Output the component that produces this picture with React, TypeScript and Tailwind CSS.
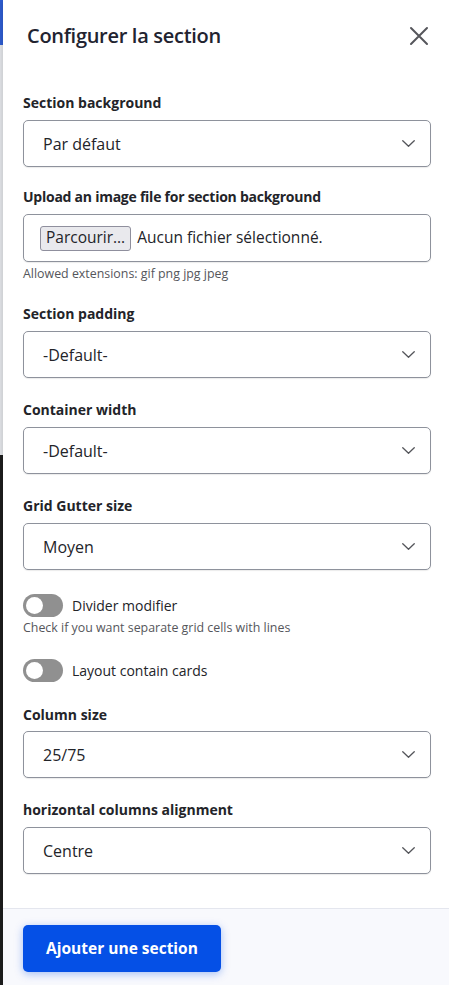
import React from "react";

const font = { fontFamily: '"Open Sans", "Noto Sans", sans-serif' };

function Chevron() {
  return (
    <svg width="13" height="7" viewBox="0 0 13 7" fill="none" className="shrink-0">
      <path d="M0.75 0.75l5.75 5.5 5.75-5.5" stroke="#55565b" strokeWidth="1.3" strokeLinecap="round" strokeLinejoin="round" />
    </svg>
  );
}

function SelectField({ label, value, mb = "mb-[23px]" }: { label: string; value: string; mb?: string }) {
  return (
    <div className={mb}>
      <div className="text-[14px] leading-[18px] font-bold text-[#232429] mb-[8px]">{label}</div>
      <div className="h-[47px] rounded-[5px] border border-[#8e929c] bg-white flex items-center justify-between pl-[19px] pr-[15px] shadow-[0_1px_1px_rgba(0,0,0,0.08)]">
        <span className="text-[16px] text-[#232429]">{value}</span>
        <Chevron />
      </div>
    </div>
  );
}

function Toggle({ label }: { label: string }) {
  return (
    <div className="flex items-center gap-[9px]">
      <div className="w-[40px] h-[23px] rounded-full bg-[#909090] flex items-center pl-[3px]">
        <div className="w-[17px] h-[17px] rounded-full bg-white" />
      </div>
      <span className="text-[14px] text-[#232429]">{label}</span>
    </div>
  );
}

export default function App() {
  return (
    <div className="flex h-[985px] w-[449px] overflow-hidden" style={font}>
      <div className="w-[3px] flex flex-col shrink-0">
        <div className="h-[45px] bg-[#2f5fd6]" />
        <div className="h-[410px] bg-[#e8eaee]" />
        <div className="flex-1 bg-[#1e1e1e]" />
      </div>
      <div className="flex-1 min-w-0 bg-white flex flex-col shadow-[-2px_0_6px_rgba(0,0,0,0.15)]">
        <div className="h-[72px] shrink-0 flex items-center justify-between pl-[24px] pr-[20px]">
          <h1 className="text-[20px] font-semibold text-[#222330] tracking-[-0.3px]">Configurer la section</h1>
          <svg width="20" height="20" viewBox="0 0 20 20" fill="none">
            <path d="M2 2l16 16M18 2L2 18" stroke="#55565b" strokeWidth="2" strokeLinecap="round" />
          </svg>
        </div>
        <div className="flex-1 min-h-0 overflow-hidden pl-[20px] pr-[18px] pt-[22px]">
          <SelectField label="Section background" value="Par défaut" mb="mb-[21px]" />
          <div className="mb-[23px]">
            <div className="text-[14px] leading-[18px] font-bold text-[#232429] mb-[8px] tracking-[-0.25px]">Upload an image file for section background</div>
            <div className="h-[48px] rounded-[5px] border border-[#8e929c] bg-white flex items-center pl-[16px] shadow-[0_1px_1px_rgba(0,0,0,0.08)]">
              <span className="h-[25px] px-[5px] flex items-center rounded-[3px] border border-[#8f8f9d] bg-[#e9e9ed] text-[15.5px] text-[#232429]">Parcourir…</span>
              <span className="ml-[6px] text-[15.5px] text-[#232429]">Aucun fichier sélectionné.</span>
            </div>
            <div className="mt-[4px] text-[12.4px] leading-[16px] text-[#55565b]">Allowed extensions: gif png jpg jpeg</div>
          </div>
          <SelectField label="Section padding" value="-Default-" />
          <SelectField label="Container width" value="-Default-" />
          <SelectField label="Grid Gutter size" value="Moyen" mb="mb-[24px]" />
          <Toggle label="Divider modifier" />
          <div className="mt-[3px] text-[12.4px] leading-[16px] text-[#55565b]">Check if you want separate grid cells with lines</div>
          <div className="mt-[23px] mb-[24px]">
            <Toggle label="Layout contain cards" />
          </div>
          <div className="mb-[23px]">
            <div className="text-[14px] leading-[18px] font-bold text-[#232429] mb-[7px]">Column size</div>
            <div className="h-[47px] rounded-[5px] border border-[#8e929c] bg-white flex items-center justify-between pl-[19px] pr-[15px] shadow-[0_1px_1px_rgba(0,0,0,0.08)]">
              <span className="text-[16px] text-[#232429]">25/75</span>
              <Chevron />
            </div>
          </div>
          <SelectField label="horizontal columns alignment" value="Centre" />
        </div>
        <div className="h-[77px] shrink-0 border-t border-[#e4e6ee] bg-[#f8f9fd] pl-[20px] pt-[16px]">
          <button className="h-[47px] w-[198px] rounded-[5px] bg-[#0550e6] text-white text-[15.5px] font-bold shadow-[0_2px_8px_rgba(5,80,230,0.35)]">
            Ajouter une section
          </button>
        </div>
      </div>
    </div>
  );
}
